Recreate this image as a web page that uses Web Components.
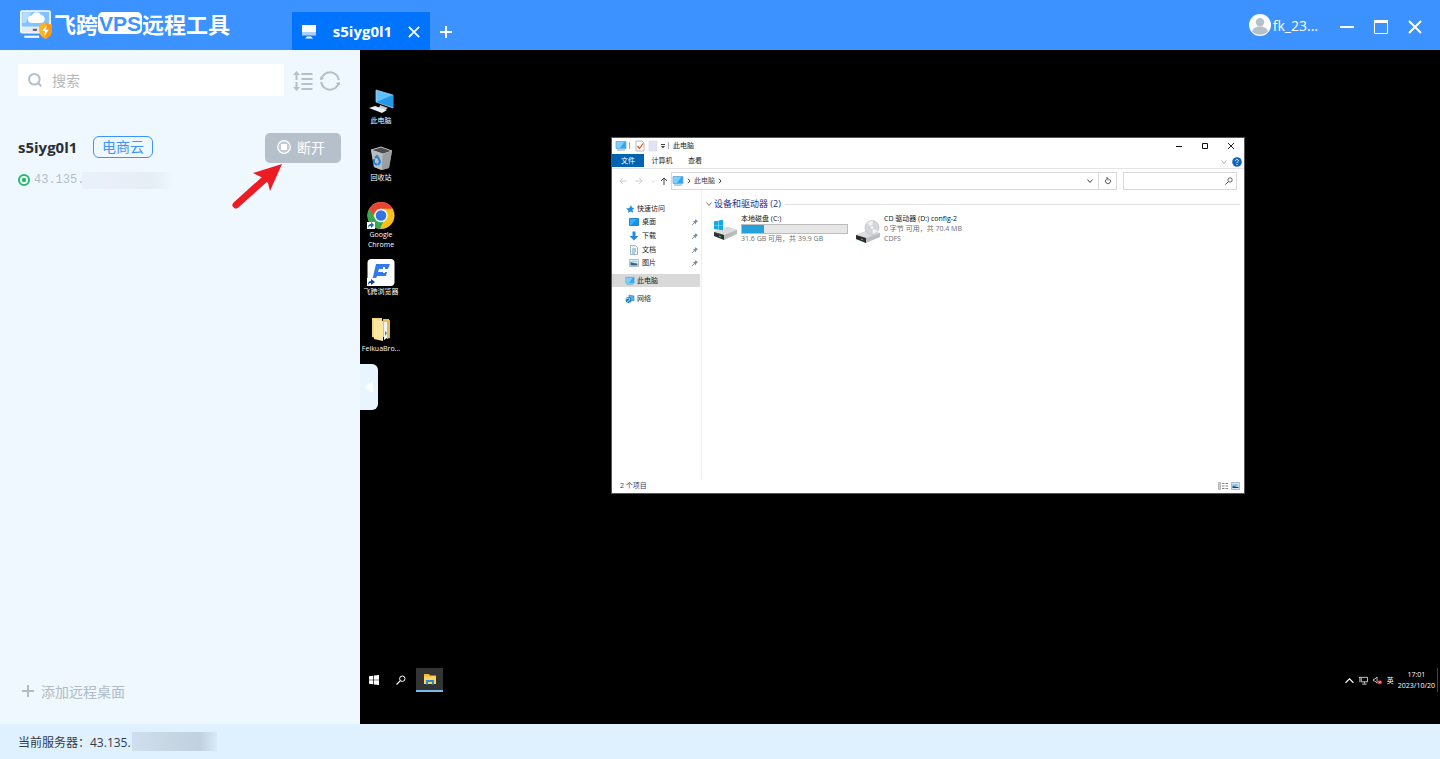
<!DOCTYPE html>
<html lang="zh-CN">
<head>
<meta charset="utf-8">
<title>飞跨VPS远程工具</title>
<style>
html, body { margin: 0; height: 100%; }
body { font-family: "Open Sans", "Noto Sans CJK SC", sans-serif; color: #2b2f36; overflow: hidden; }
</style>
</head>
<body>
<app-shell></app-shell>
<script>
const ICONS = {
  logo: ['0 0 32 28', `<rect x="1" y="1" width="29" height="22" rx="2" fill="#fff"/><rect x="2.500" y="2.500" width="26" height="14" fill="#7fc3ff"/><path d="M3 3h9l-6 10H3z" fill="#b6dcff"/><path d="M12 13a3.500 3.500 0 0 1 0-7 5 5 0 0 1 9-.5 3.800 3.800 0 0 1 0 7.500z" fill="#fff"/><rect x="2.500" y="17" width="26" height="5" fill="#e4ebf2"/><path d="M13 19.500h4" stroke="#667" stroke-width="2"/><path d="M5 25h14v2H5z" fill="#fff"/><path d="M25 12c2 2 4 2.500 6 2.500V20c0 4-3 6.500-6 8-3-1.500-6-4-6-8v-5.500c2 0 4-.5 6-2.500z" fill="#ffb21c"/><path d="M25 12c2 2 4 2.500 6 2.500V20c0 4-3 6.500-6 8z" fill="#f99a12"/><path d="M26 15l-4 5.500h2.500L24 25l4-5.500h-2.500z" fill="#fff"/>`],
  screen: ['0 0 16 16', `<path d="M1 2h14v7H1z" fill="#fff"/><path d="M1 9h14v3.500H1z" fill="#a9d0ff"/><path d="M4 15.500l2-2h4l2 2z" fill="#fff"/>`],
  close: ['0 0 14 14', `<path d="M1 1l12 12M13 1L1 13" stroke="currentColor" stroke-width="2" fill="none"/>`],
  plus: ['0 0 14 14', `<path d="M7 1v12M1 7h12" stroke="currentColor" stroke-width="2"/>`],
  min: ['0 0 14 14', `<path d="M0 7h14" stroke="currentColor" stroke-width="2"/>`],
  max: ['0 0 14 14', `<path d="M.5.500h13v13H.5z" stroke="currentColor" fill="none"/><path d="M0 1.500h14" stroke="currentColor" stroke-width="3"/>`],
  avatar: ['0 0 22 22', `<circle cx="11" cy="11" r="11" fill="#fff"/><circle cx="11" cy="8.200" r="4.200" fill="#b4c0ca"/><path d="M3 17c1-3 4-4.500 8-4.500s7 1.500 8 4.500c-3.500 5-12.500 5-16 0z" fill="#b4c0ca"/>`],
  search: ['0 0 14 14', `<circle cx="6.300" cy="6.300" r="5.300" stroke="currentColor" stroke-width="2" fill="none"/><path d="M10 10l3.300 3.300" stroke="currentColor" stroke-width="2"/>`],
  sort: ['0 0 20 20', `<path d="M3.500 3v6M3.500 11v7" stroke="currentColor" stroke-width="2"/><path d="M3.500 0L7 4H0zM3.500 20L7 16H0z" fill="currentColor"/><path d="M8.500 3h11M8.500 8h11M8.500 13h11M8.500 18h11" stroke="currentColor" stroke-width="2"/>`],
  refresh: ['0 0 20 20', `<path d="M1.200 8.500A9 9 0 0 1 18.900 9M18.800 11.500A9 9 0 0 1 1.100 11" stroke="currentColor" stroke-width="2" fill="none"/><path d="M0 5.500L.3 9l4-1.300zM20 14.500l-.3-3.500-4 1.300z" fill="currentColor"/>`],
  stop: ['0 0 14 14', `<circle cx="7" cy="7" r="6.300" stroke="#fff" stroke-width="1.200" fill="#c3ccd4"/><rect x="4" y="4" width="6" height="6" rx="1" fill="#fff"/>`],
  online: ['0 0 12 12', `<circle cx="6" cy="6" r="5" stroke="#22b96d" stroke-width="2" fill="#fff"/><circle cx="6" cy="6" r="2.200" fill="#22b96d"/>`],
  arrow: ['0 0 50 46', `<path d="M4 41L33 15" stroke="#ed1c24" stroke-width="7" stroke-linecap="round"/><path d="M50 0L21 9l10 5 5 5 2 8z" fill="#ed1c24"/>`],
  pc: ['0 0 28 28', `<path d="M9 2l17 5v13L9 14z" fill="#5fc0ff" stroke="#bcd5e6" stroke-width=".7"/><path d="M9.500 14L26 7v12.500z" fill="#2398e8"/><path d="M13 17l8 3-3 2-6-2z" fill="#c7ccd0"/><path d="M2 20l6-2 12 4-5 3z" fill="#edf0f2"/>`],
  bin: ['0 0 28 28', `<path d="M4 5l10-3 11 4-3 17-8 2-7-3z" fill="#8d9296"/><path d="M4 5l10-3 11 4-9 3z" fill="#4c4c4a" stroke="#b9bdc0"/><path d="M4 5l12 4-1 16-8-3z" fill="#b8bdc0"/><path d="M16 9l9-3-3 17-7 2z" fill="#9b9fa2"/><path d="M8 13l2-2 2 3M7 14v4l3 2M11 20l2-3-1-3" fill="none" stroke="#1682dc" stroke-width="2"/>`],
  chrome: ['0 0 28 28', `<circle cx="14" cy="13.500" r="13.500" fill="#fbc116"/><path d="M2.300 6.800a13.500 13.500 0 0 1 23.400 0H14a6.700 6.700 0 0 0-5.800 3.400L6 14z" fill="#ea4335"/><path d="M2.300 6.800l5.900 10a6.700 6.700 0 0 0 8 3L13 27A13.500 13.500 0 0 1 2.300 6.800z" fill="#34a853"/><circle cx="14" cy="13.500" r="6.700" fill="#fff"/><circle cx="14" cy="13.500" r="5.300" fill="#3274e8"/><path d="M0 20h8v7H0z" fill="#fff"/><path d="M1 26c0-3 1-4 3-4v-2l3 3-3 3v-2c-1 0-2 0-3 2z" fill="#176bb5"/>`],
  feikua: ['0 0 28 28', `<rect x=".5" width="27" height="27" rx="4" fill="#fff"/><path d="M9 5h14l-2 5H12l-1 3h9l-1 4h-9l-2 5H5z" fill="#3478ed"/><path d="M16 8h2v2h3v2h-3v2h-2v-2h-2v-2h2z" fill="#fff"/><path d="M0 19h9v8H0z" fill="#fff"/><path d="M1 26c0-3 1-4 3-4v-2l4 3-4 3v-2c-1 0-2 0-3 2z" fill="#123f8d"/>`],
  files: ['0 0 28 28', `<path d="M5 2h10v21l-10-2z" fill="#f5d780"/><path d="M16 3h6v18h-6z" fill="#e8bd59"/><path d="M7 3l9 2v20l-9-2z" fill="#ffe6a0"/><path d="M17 6h3v16l-3 2z" fill="#f1f5f8"/><path d="M18 15l2 2-2 3z" fill="#1695bc"/><path d="M20 5l3-1v18l-3 1z" fill="#e5b858"/>`],
  monitor: ['0 0 12 12', `<path d="M1 1.500h10v7H1z" fill="#32a7f2" stroke="#6ba5c8" stroke-width=".7"/><path d="M1.300 2h8L5 8H1.300z" fill="#7bd0ff"/><path d="M2 10h8" stroke="#76a6bd" stroke-width="1"/>`],
  check: ['0 0 10 12', `<path d="M1 1h6l2 2v8H1z" fill="#fff" stroke="#a2a6a9" stroke-width=".8"/><path d="M2.500 6l2 2.500L8 3.500" fill="none" stroke="#d35b36" stroke-width="1.300"/>`],
  page: ['0 0 10 12', `<path d="M1 1h8v10H1z" fill="#e4e3f5" stroke="#d2d1e6" stroke-width=".5"/>`],
  caret: ['0 0 8 8', `<path d="M2 2.500h4" stroke="#444" stroke-width="1"/><path d="M2 4h4L4 6.500z" fill="#444"/>`],
  wmin: ['0 0 8 8', `<path d="M1 4.500h6" stroke="#111"/>`],
  wmax: ['0 0 8 8', `<path d="M1.500 1.500h5v5h-5z" fill="none" stroke="#111"/>`],
  wclose: ['0 0 8 8', `<path d="M1 1l6 6M7 1L1 7" stroke="#111" stroke-width=".9"/>`],
  down: ['0 0 8 8', `<path d="M1.500 2.500L4 5.500l2.500-3" fill="none" stroke="currentColor"/>`],
  up: ['0 0 8 8', `<path d="M.5 6L4 2.500 7.500 6" fill="none" stroke="currentColor"/>`],
  right: ['0 0 8 8', `<path d="M3 1.800L5 4 3 6.200" fill="none" stroke="currentColor"/>`],
  back: ['0 0 8 8', `<path d="M8 4H1M4 1L1 4l3 3" fill="none" stroke="currentColor" stroke-width=".9"/>`],
  fwd: ['0 0 8 8', `<path d="M0 4h7M4 1l3 3-3 3" fill="none" stroke="currentColor" stroke-width=".9"/>`],
  uparr: ['0 0 8 8', `<path d="M4 8V1M1 4l3-3 3 3" fill="none" stroke="currentColor"/>`],
  reload: ['0 0 8 8', `<path d="M5.500 2.200a2.500 2.500 0 1 1-3 0M2 1h2v2.500" fill="none" stroke="#444" stroke-width=".9"/>`],
  lens: ['0 0 10 10', `<circle cx="6.300" cy="3.700" r="2.700" fill="none" stroke="currentColor"/><path d="M4.400 5.600L.5 9.500" stroke="currentColor" stroke-width="1.200"/>`],
  help: ['0 0 10 10', `<circle cx="5" cy="5" r="4.800" fill="#0f64bd"/><path d="M3.500 3.800c.2-2 3.200-1.600 2.900.1C6.200 4.800 5 4.800 5 6M5 7v1" stroke="#fff" fill="none"/>`],
  star: ['0 0 10 10', `<path d="M6 1l1 2.500 2.500.5-2 1.800.7 3L5.500 7.500 3 9l.4-2.800L1 4.500l3.300-.6z" fill="#2590df"/>`],
  desk: ['0 0 10 10', `<path d="M.5 1.500h9v7h-9z" fill="#1590eb" stroke="#0877ce" stroke-width=".8"/><path d="M1 2h7L2 8H1z" fill="#39b0ff"/>`],
  dl: ['0 0 10 10', `<path d="M3.500.5h3V5h3L5 9.500.5 5h3z" fill="#2c87dc"/>`],
  doc: ['0 0 10 10', `<path d="M1.500.5h5l2 2v7h-7z" fill="#f4f9fc" stroke="#8da5b3" stroke-width=".8"/><path d="M3 4h4M3 6h4M3 8h3" stroke="#499ac5" stroke-width=".9"/>`],
  pic: ['0 0 10 10', `<path d="M.5 1.500h9v7h-9z" fill="#fff" stroke="#a1acb3" stroke-width=".8"/><path d="M1.500 2.500h7v2h-7z" fill="#a3d1ee"/><path d="M1.500 4l3 1 4 .5v2h-7z" fill="#276784"/>`],
  net: ['0 0 10 10', `<path d="M4 1l5 1v5L4 6z" fill="#4db0eb" stroke="#61859c" stroke-width=".7"/><circle cx="3.500" cy="6" r="2.900" fill="#2481be"/><path d="M1 5l3-1 1 2-3 2M4 9l2-1 1-1" stroke="#8ed2ed" fill="none"/>`],
  pin: ['0 0 8 8', `<path d="M4.500 1l2.500 2.500-1 .2L5 5v1.500L1.800 3.200h1.500L4.300 2z" fill="#7c8b98"/><path d="M3.300 4.800L1 7" stroke="#7c8b98" stroke-width=".9"/>`],
  disk: ['0 0 26 24', `<path d="M2 1.500l4-.6v4H2zM6.600.8L11 .1v4.800H6.600zM2 5.500h4v4l-4-.6zM6.600 5.500H11v4.800l-4.400-.7z" fill="#13a9e3"/><path d="M2 12l13-5 10 3v4l-13 6-10-4z" fill="#b8babc"/><path d="M2 12l13-5 10 3-13 5z" fill="#dadcdd"/><path d="M2 12l10 3v5l-10-4z" fill="#303233"/><path d="M7 16l2 1" stroke="#3bdd75"/><path d="M2 1.500l4-.6v4H2zM6.600.8L11 .1v4.800H6.600zM2 5.500h4v4l-4-.6zM6.600 5.500H11v4.800l-4.400-.7z" fill="#13a9e3"/>`],
  cd: ['0 0 26 24', `<path d="M1 15l13-5 11 3v4l-14 6-10-4z" fill="#bbbdbf"/><path d="M1 15l13-5 11 3-14 5z" fill="#dcdddf"/><path d="M1 15l10 3v5l-10-4z" fill="#292b2c"/><path d="M6 19l2 1" stroke="#3bdd75"/><circle cx="17" cy="7.500" r="7" fill="#d4d6d9" stroke="#b6b9bc" stroke-width=".6"/><path d="M17 8l-5-5a7 7 0 0 1 6-2zM17 8l6 3a7 7 0 0 1-5 3z" fill="#eff3f4"/><circle cx="17" cy="7.500" r="2" fill="#f7f7f7" stroke="#b5b8bb" stroke-width=".6"/>`],
  list: ['0 0 10 8', `<path d="M.5.500h2v7h-2z" fill="#ccc" stroke="#999" stroke-width=".6"/><path d="M4 1.500h2.500M7.500 1.500H10M4 4h2.500M7.500 4H10M4 6.500h2.500M7.500 6.500H10" stroke="#777" stroke-width=".9"/>`],
  thumbs: ['0 0 10 8', `<path d="M.5.500h8v7h-8z" fill="#cde6f8" stroke="#aaa" stroke-width=".8"/><path d="M1.500 2.500h5v1h-5z" fill="#4798dc"/><path d="M1.500 4l3 .5 3 .5v1h-6z" fill="#1d4862"/>`],
  win: ['0 0 10 10', `<path d="M0 1.300L4.300.7v4H0zM5 .6L10 0v4.700H5zM0 5.300h4.300v4L0 8.700zM5 5.300h5V10l-5-.6z" fill="#fff"/>`],
  folder: ['0 0 14 12', `<path d="M1 1h5l1 1.500h6V11H1z" fill="#f5b93d"/><path d="M1 3.500h12V11H1z" fill="#ffd45c"/><path d="M3 11.500V7h8v4.500H9V9H5v2.500z" fill="#278bd8"/>`],
  network: ['0 0 10 10', `<path d="M2.500 1.500h7v5h-7zM6 6.500v2M3.500 9h5M1 1v6M0 1.500h2" fill="none" stroke="#ddd"/>`],
  mute: ['0 0 10 10', `<path d="M.5 3.500H2L4.500 1v7L2 5.500H.5z" fill="none" stroke="#ddd" stroke-width=".9"/><circle cx="7.500" cy="7" r="2.400" fill="#e3262c"/><path d="M6.500 6l2 2M8.500 6l-2 2" stroke="#fff" stroke-width=".8"/>`],
  collapse: ['0 0 10 12', `<path d="M0 6l9-6v12z" fill="#fff"/>`]
};

class BaseElement extends HTMLElement {
  connectedCallback() {
    if (this.shadowRoot) return;
    const root = this.attachShadow({ mode: 'open' });
    const tpl = document.createElement('template');
    tpl.innerHTML = `<style>*{box-sizing:border-box}button,input{font:inherit;color:inherit;border:0;margin:0;padding:0;background:none}button{display:flex;align-items:center;justify-content:center;cursor:pointer}${this.constructor.css || ''}</style>${this.render()}`;
    root.append(tpl.content.cloneNode(true));
  }
}

customElements.define('ui-icon', class extends BaseElement {
  static css = `:host{display:block;flex:none;width:var(--w,14px);height:var(--h,var(--w,14px))}svg{display:block;width:100%;height:100%}`;
  render() {
    const [box, body] = ICONS[this.getAttribute('name')];
    return `<svg viewBox="${box}" aria-hidden="true">${body}</svg>`;
  }
});

customElements.define('title-bar', class extends BaseElement {
  static css = `
    :host{display:flex;background:#3c92ff;color:#fff;align-items:stretch}
    .brand{width:292px;flex:none;display:flex;align-items:center;padding:0 0 2px 19px;font-size:22px;line-height:24px;font-weight:700;font-family:"Noto Sans CJK SC",sans-serif;white-space:nowrap}
    .brand ui-icon{--w:34px;--h:30px;margin-right:1px}
    .name{display:flex;align-items:center;padding-bottom:2px}
    .vps{background:#fff;color:#3c92ff;border-radius:5px;height:22px;line-height:23px;width:44px;text-align:center;font-family:"Liberation Sans",sans-serif;font-size:21px}
    .tab{display:flex;align-items:center;margin-top:12px;width:138px;background:#0073ff;font-size:15px;font-weight:700;padding:0 10px 0 9px}
    .tab ui-icon{--w:16px}
    .tab span{flex:1;text-align:center}
    .tab button ui-icon{--w:12px}
    .tab button{padding-top:2px}
    .add{margin-top:12px;width:32px;padding-top:2px}
    .right{margin-left:auto;display:flex;align-items:center;padding:4px 18px 0 0;font-size:14px}
    .user{display:flex;align-items:center;gap:2px;margin-right:22px;padding-bottom:4px}
    .user ui-icon{--w:22px}
    .ctl{display:flex;gap:20px}`;
  render() {
    return `<div class="brand"><ui-icon name="logo"></ui-icon><div class="name">飞跨<span class="vps">VPS</span>远程工具</div></div>
      <div class="tab"><ui-icon name="screen"></ui-icon><span>s5iyg0l1</span><button aria-label="关闭标签"><ui-icon name="close"></ui-icon></button></div>
      <button class="add" aria-label="新建标签"><ui-icon name="plus"></ui-icon></button>
      <div class="right"><div class="user"><ui-icon name="avatar"></ui-icon>fk_23...</div>
      <div class="ctl"><button aria-label="最小化"><ui-icon name="min"></ui-icon></button><button aria-label="最大化"><ui-icon name="max"></ui-icon></button><button aria-label="关闭"><ui-icon name="close"></ui-icon></button></div></div>`;
  }
});

customElements.define('server-card', class extends BaseElement {
  static css = `
    :host{display:block;position:relative}
    .row{display:flex;align-items:center;height:30px}
    .name{font-size:15px;font-weight:700;width:75px;padding-bottom:2px}
    .tag{border:1px solid #3c92ff;border-radius:6px;color:#3c92ff;font-size:14px;line-height:20px;height:22px;padding:0 8px;margin-bottom:2px}
    button{margin-left:auto;width:76px;height:30px;border-radius:5px;background:#b5c0ca;color:#fff;font-size:14px;gap:6px;padding:0 4px 2px 0}
    .ip{display:flex;align-items:center;gap:4px;height:18px;margin-top:8px;color:#b3bfca;font:12px/18px "Liberation Mono",monospace}
    .ip ui-icon{--w:12px}
    .mask{width:92px;height:17px;margin-left:-6px;background:linear-gradient(90deg,#e9f1fa,#e8eff8 40%,#e5edf5 75%,#eff7ff)}
    .pointer{position:absolute;left:214px;top:31px;--w:50px;--h:46px}`;
  render() {
    return `<div class="row"><span class="name"><slot name="name"></slot></span><span class="tag"><slot name="tag"></slot></span><button><ui-icon name="stop"></ui-icon>断开</button></div>
      <div class="ip"><ui-icon name="online"></ui-icon><slot name="ip"></slot><span class="mask"></span></div><ui-icon class="pointer" name="arrow"></ui-icon>`;
  }
});

customElements.define('side-panel', class extends BaseElement {
  static css = `
    :host{display:flex;flex-direction:column;background:#eff7ff;padding:14px 19px 20px 18px}
    .tools{display:flex;align-items:center;color:#b4c0ca;margin:0 1px 37px 0}
    .search{display:flex;align-items:center;flex:1;height:32px;background:#fff;padding:0 10px;gap:10px;margin-right:9px}
    input{flex:1;min-width:0;outline:0;font-size:14px;color:#333}
    input::placeholder{color:#b3b9c0;opacity:1}
    .tools button{--w:20px;padding-top:2px}
    .tools button+button{margin-left:7px}
    .add{margin-top:auto;align-self:flex-start;height:24px;gap:6px;padding:0 0 2px 3px;font-size:14px;color:#b0bcc6}`;
  render() {
    return `<div class="tools"><label class="search"><ui-icon name="search"></ui-icon><input type="text" placeholder="搜索" aria-label="搜索"></label>
      <button aria-label="排序"><ui-icon name="sort"></ui-icon></button><button aria-label="刷新"><ui-icon name="refresh"></ui-icon></button></div>
      <server-card><span slot="name">s5iyg0l1</span><span slot="tag">电商云</span><span slot="ip">43.135.</span></server-card>
      <button class="add"><ui-icon name="plus"></ui-icon>添加远程桌面</button>`;
  }
});

customElements.define('desktop-icon', class extends BaseElement {
  static css = `:host{display:flex;flex-direction:column;align-items:center;font-size:7px;line-height:10px;text-align:center;color:#fff;white-space:nowrap}ui-icon{--w:28px}`;
  render() { return `<ui-icon name="${this.getAttribute('icon')}"></ui-icon><slot></slot>`; }
});

customElements.define('nav-item', class extends BaseElement {
  static css = `
    :host{display:flex;align-items:center;gap:2px;padding:0 1px 0 13px;height:13px}
    :host([child]){padding-left:17px;gap:3px}
    :host([selected]){background:#d9d9d9}
    .pin{margin-left:auto;--w:8px}.main{--w:10px}`;
  render() {
    return `<ui-icon class="main" name="${this.getAttribute('icon')}"></ui-icon><slot></slot>${this.hasAttribute('child') ? '<ui-icon class="pin" name="pin"></ui-icon>' : ''}`;
  }
});

customElements.define('drive-item', class extends BaseElement {
  static css = `
    :host{display:flex;gap:3px;width:143px;color:#6d6d6d;white-space:nowrap}
    ui-icon{--w:26px;--h:24px;margin-top:6px}
    .text{flex:1;line-height:10px}
    .name{color:#111}
    progress{display:block;appearance:none;-webkit-appearance:none;width:107px;height:10px;border:1px solid #bcbcbc;margin:0}
    progress::-webkit-progress-bar{background:#e6e6e6}
    progress::-webkit-progress-value{background:#26a0da}`;
  render() {
    const used = this.getAttribute('used');
    return `<ui-icon name="${this.getAttribute('icon')}"></ui-icon><div class="text"><div class="name"><slot name="name"></slot></div>${used ? `<progress max="100" value="${used}" aria-label="已用空间"></progress>` : ''}<slot></slot></div>`;
  }
});

customElements.define('explorer-window', class extends BaseElement {
  static css = `
    :host{display:flex;flex-direction:column;background:#fff;color:#222;font-size:7px;line-height:10px;border:1px solid #555}
    ui-icon{--w:8px}
    .title{display:flex;align-items:center;height:16px;padding:0 0 1px 3px}
    .title .m,.path .m{--w:12px}
    .title .d{--w:10px;--h:12px}
    .title .sep{width:1px;height:7px;background:#aaa;margin:0 5px 0 2px}
    .title .sep.b{margin:0 4px 0 1px}
    .title .d+.d{margin:0 1px 0 3px}
    .wc{display:flex;margin-left:auto;gap:18px;padding-right:9px}
    .tabs{display:flex;height:15px;border-bottom:1px solid #e4e4e4;align-items:flex-start}
    .tabs button{height:13px;width:36px}
    .tabs .file{background:#0063b1;color:#fff;width:32px}
    .tabs .view{width:30px}
    .tabs .end{margin-left:auto;display:flex;align-items:center;gap:4px;padding:3px 2px 0 0;color:#aaa}
    .end .h{--w:10px}
    .addr{display:flex;height:18px;margin:3px 7px 0 7px;align-items:stretch}
    .hist{display:flex;align-items:center;gap:8px;width:52px;color:#c8c8c8}
    .hist .s{--w:5px}
    .hist .u{color:#444;margin-left:-4px}
    .path{display:flex;align-items:center;flex:1;border:1px solid #d9d9d9;gap:1px;color:#444}
    .path .dd{margin-left:auto;margin-right:4px}
    .path .r{width:18px;height:100%;border-left:1px solid #d9d9d9;margin-left:-1px}
    .find{display:flex;align-items:center;width:114px;border:1px solid #d9d9d9;margin-left:6px;padding-right:3px;color:#444}
    .find input{flex:1;min-width:0;outline:0}
    .body{display:flex;flex:1}
    nav{width:90px;padding-top:12px;border-right:1px solid #eee}
    nav>*{margin-right:1px}
    .quick{display:grid;grid-auto-rows:1fr;height:68px;align-items:center;margin-bottom:4px}
    nav nav-item+nav-item{margin-top:5px}
    nav .quick nav-item{margin-top:0}
    main{flex:1;padding:8px 4px 0 3px}
    h2{display:flex;align-items:center;gap:1px;margin:0;font-size:9px;line-height:12px;font-weight:400;color:#1e3287;white-space:nowrap}
    h2 ui-icon{color:#777}
    h2::after{content:"";flex:1;height:1px;background:#e2e2e2;margin-left:3px}
    .drives{display:flex;padding:4px 0 0 7px}
    footer{display:flex;height:14px;align-items:center;padding:0 3px 0 8px;color:#26406e}
    footer .v{margin-left:auto;display:flex;gap:3px}
    footer .v ui-icon{--w:10px;--h:8px}`;
  render() {
    return `<div class="title"><ui-icon class="m" name="monitor"></ui-icon><i class="sep"></i><ui-icon class="d" name="check"></ui-icon><ui-icon class="d" name="page"></ui-icon><ui-icon name="caret"></ui-icon><i class="sep b"></i><span>此电脑</span>
        <div class="wc"><button aria-label="最小化"><ui-icon name="wmin"></ui-icon></button><button aria-label="最大化"><ui-icon name="wmax"></ui-icon></button><button aria-label="关闭"><ui-icon name="wclose"></ui-icon></button></div></div>
      <div class="tabs"><button class="file">文件</button><button>计算机</button><button class="view">查看</button><div class="end"><ui-icon name="down"></ui-icon><ui-icon class="h" name="help"></ui-icon></div></div>
      <div class="addr"><div class="hist"><ui-icon name="back"></ui-icon><ui-icon name="fwd"></ui-icon><ui-icon class="s" name="down"></ui-icon><ui-icon class="u" name="uparr"></ui-icon></div>
        <div class="path"><ui-icon class="m" name="monitor"></ui-icon><ui-icon name="right"></ui-icon><span>此电脑</span><ui-icon name="right"></ui-icon><ui-icon class="dd" name="down"></ui-icon><button class="r" aria-label="刷新"><ui-icon name="reload"></ui-icon></button></div>
        <label class="find"><input type="text" aria-label="搜索此电脑"><ui-icon name="lens"></ui-icon></label></div>
      <div class="body"><nav><div class="quick"><nav-item icon="star">快速访问</nav-item><nav-item icon="desk" child>桌面</nav-item><nav-item icon="dl" child>下载</nav-item><nav-item icon="doc" child>文档</nav-item><nav-item icon="pic" child>图片</nav-item></div>
        <nav-item icon="monitor" selected>此电脑</nav-item><nav-item icon="net">网络</nav-item></nav>
        <main><h2><ui-icon name="down"></ui-icon>设备和驱动器 (2)</h2>
        <div class="drives"><drive-item icon="disk" used="21"><span slot="name">本地磁盘 (C:)</span>31.6 GB 可用，共 39.9 GB</drive-item><drive-item icon="cd"><span slot="name">CD 驱动器 (D:) config-2</span>0 字节 可用，共 70.4 MB<br>CDFS</drive-item></div></main></div>
      <footer>2 个项目<div class="v"><ui-icon name="list"></ui-icon><ui-icon name="thumbs"></ui-icon></div></footer>`;
  }
});

customElements.define('task-bar', class extends BaseElement {
  static css = `
    :host{display:flex;align-items:center;height:24px;color:#fff;font-size:7px;line-height:11px;padding:0 2px 0 0}
    .b{width:27px;height:24px;--w:10px}
    .on{background:#343434;border-bottom:2px solid #76b9ed;--w:14px;--h:12px;margin-left:2px}
    .tray{margin-left:auto;display:flex;align-items:center;gap:5px;--w:9px}
    .clock{text-align:center;height:22px;margin-left:-1px}
    .edge{width:1px;height:24px;background:#444;margin-left:-3px}`;
  render() {
    return `<button class="b" aria-label="开始"><ui-icon name="win"></ui-icon></button><button class="b" aria-label="搜索"><ui-icon name="lens"></ui-icon></button><button class="b on" aria-label="文件资源管理器"><ui-icon name="folder"></ui-icon></button>
      <div class="tray"><ui-icon name="up"></ui-icon><ui-icon name="network"></ui-icon><ui-icon name="mute"></ui-icon><span>英</span><div class="clock">17:01<br>2023/10/20</div><i class="edge"></i></div>`;
  }
});

customElements.define('remote-desktop', class extends BaseElement {
  static css = `
    :host{display:flex;flex-direction:column;position:relative;background:#000;padding:38px 0 32px;min-width:0}
    .icons{display:grid;grid-auto-rows:57px;width:42px;flex:1;align-content:start}
    explorer-window{position:absolute;left:251px;top:87px;width:634px;height:357px}
    .handle{position:absolute;left:0;top:314px;width:18px;height:46px;background:#e8f4ff;border-radius:0 6px 6px 0;--w:10px;--h:12px}`;
  render() {
    return `<div class="icons"><desktop-icon icon="pc">此电脑</desktop-icon><desktop-icon icon="bin">回收站</desktop-icon><desktop-icon icon="chrome"><span>Google<br>Chrome</span></desktop-icon><desktop-icon icon="feikua">飞跨浏览器</desktop-icon><desktop-icon icon="files">FeikuaBro...</desktop-icon></div>
      <explorer-window></explorer-window><task-bar></task-bar><button class="handle" aria-label="收起侧栏"><ui-icon name="collapse"></ui-icon></button>`;
  }
});

customElements.define('status-bar', class extends BaseElement {
  static css = `:host{display:flex;align-items:center;background:#dff0ff;padding-left:18px;font-size:12px;color:#333b45}
    .mask{width:85px;height:19px;margin-left:1px;background:linear-gradient(90deg,#cfdfee,#c7d6e3 45%,#c2d1df 80%,#d8e9f8)}`;
  render() { return `<span>当前服务器：43.135.</span><span class="mask"></span>`; }
});

customElements.define('app-shell', class extends BaseElement {
  static css = `:host{display:grid;grid-template-rows:50px 1fr 35px;height:100vh}.main{display:grid;grid-template-columns:360px 1fr;min-height:0}`;
  render() { return `<title-bar></title-bar><div class="main"><side-panel></side-panel><remote-desktop></remote-desktop></div><status-bar></status-bar>`; }
});
</script>
</body>
</html>
